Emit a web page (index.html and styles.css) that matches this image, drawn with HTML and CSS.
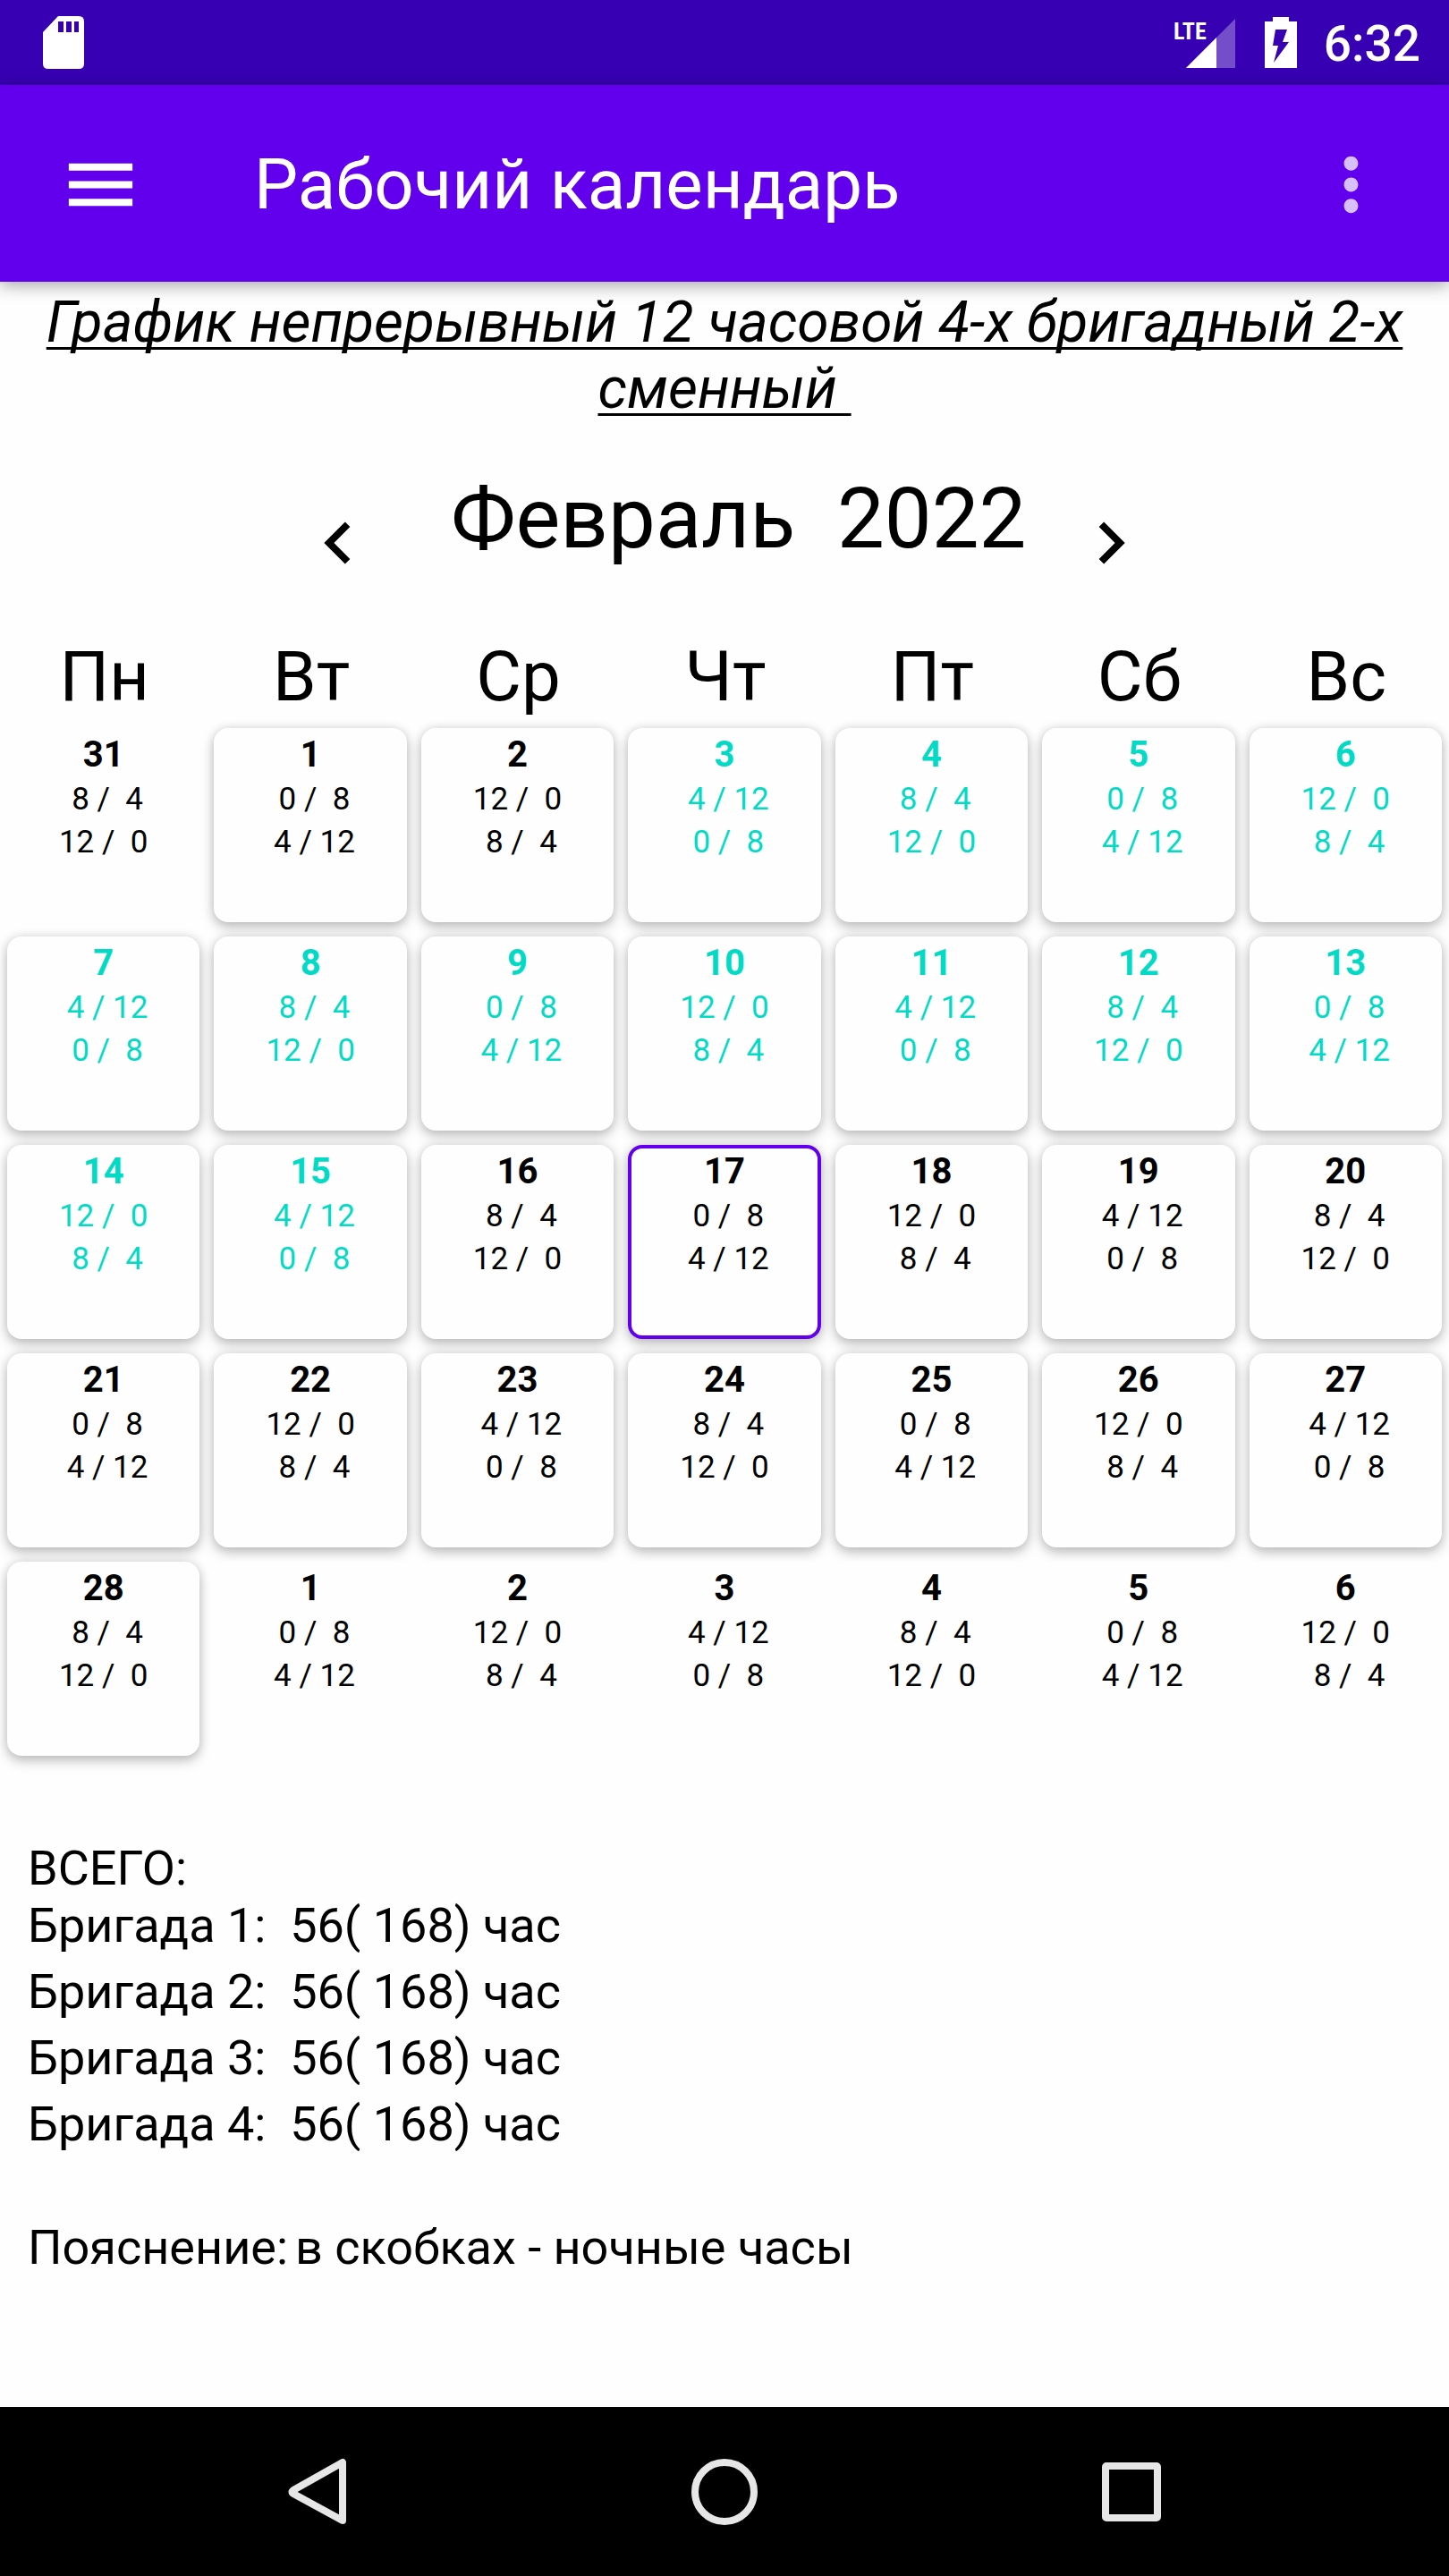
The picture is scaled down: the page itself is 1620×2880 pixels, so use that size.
FILE: index.html
```html
<!DOCTYPE html>
<html lang="ru">
<head>
<meta charset="utf-8">
<meta name="viewport" content="width=device-width, initial-scale=1">
<title>Рабочий календарь</title>
<link rel="stylesheet" href="styles.css">
</head>
<body>
<div class="screen">
  <div class="status-bar">
    <svg class="sd-icon" width="46" height="59" viewBox="0 0 46 59" aria-hidden="true">
      <path fill="#fff" fill-rule="evenodd" d="M17 0H40Q46 0 46 6V53Q46 59 40 59H6Q0 59 0 53V18ZM17 6V18H23V6ZM26 6V18H32V6ZM35 6V18H40V6Z"/>
    </svg>
    <div class="status-right">
      <svg class="signal-icon" width="68" height="57" viewBox="0 0 68 57" role="img" aria-label="LTE">
        <path fill="#fff" fill-opacity=".3" d="M68 2V57H13Z"/>
        <path fill="#fff" d="M47 23V57H13Z"/>
        <text class="lte" x="-1" y="25">LTE</text>
      </svg>
      <svg class="battery-icon" width="36" height="57" viewBox="0 0 36 57" aria-hidden="true">
        <path fill="#fff" fill-rule="evenodd" d="M9 0H27V5H36V57H0V5H9ZM12 14L9 32H15L10 51L27 28H20L25 14Z"/>
      </svg>
      <span class="clock">6:32</span>
    </div>
  </div>

  <header class="app-bar">
    <button class="icon-button" type="button" aria-label="Меню">
      <svg width="95" height="95" viewBox="0 0 24 24" aria-hidden="true"><path fill="#fff" d="M3 18h18v-2H3zm0-5h18v-2H3zm0-7v2h18V6z"/></svg>
    </button>
    <h1 class="app-title">Рабочий календарь</h1>
    <button class="icon-button" type="button" aria-label="Ещё">
      <svg width="95" height="95" viewBox="0 0 24 24" aria-hidden="true"><path fill="#d7bffb" d="M12 8c1.1 0 2-.9 2-2s-.9-2-2-2-2 .9-2 2 .9 2 2 2zm0 2c-1.100 0-2 .9-2 2s.9 2 2 2 2-.9 2-2-.9-2-2-2zm0 6c-1.100 0-2 .9-2 2s.9 2 2 2 2-.9 2-2-.9-2-2-2z"/></svg>
    </button>
  </header>

  <main class="content">
    <h2 class="schedule-name">График непрерывный 12 часовой 4-х бригадный 2-х сменный&nbsp;</h2>

    <div class="month-nav">
      <button class="month-button" type="button" aria-label="Предыдущий месяц">
        <svg width="94" height="94" viewBox="0 0 24 24" aria-hidden="true"><path d="M15.410 7.410L14 6l-6 6 6 6 1.410-1.410L10.830 12z"/></svg>
      </button>
      <h3 class="month-title"> Февраль  2022</h3>
      <button class="month-button" type="button" aria-label="Следующий месяц">
        <svg width="94" height="94" viewBox="0 0 24 24" aria-hidden="true"><path d="M10 6L8.590 7.410 13.170 12l-4.580 4.590L10 18l6-6z"/></svg>
      </button>
    </div>

    <table class="calendar">
      <thead>
        <tr><th scope="col">Пн</th><th scope="col">Вт</th><th scope="col">Ср</th><th scope="col">Чт</th><th scope="col">Пт</th><th scope="col">Сб</th><th scope="col">Вс</th></tr>
      </thead>
      <tbody>
        <tr>
          <td><div class="day outside"><strong>31</strong><span> 8 /  4</span><span>12 /  0</span></div></td>
          <td><div class="day"><strong>1</strong><span> 0 /  8</span><span> 4 / 12</span></div></td>
          <td><div class="day"><strong>2</strong><span>12 /  0</span><span> 8 /  4</span></div></td>
          <td><div class="day vacation"><strong>3</strong><span> 4 / 12</span><span> 0 /  8</span></div></td>
          <td><div class="day vacation"><strong>4</strong><span> 8 /  4</span><span>12 /  0</span></div></td>
          <td><div class="day vacation"><strong>5</strong><span> 0 /  8</span><span> 4 / 12</span></div></td>
          <td><div class="day vacation"><strong>6</strong><span>12 /  0</span><span> 8 /  4</span></div></td>
        </tr>
        <tr>
          <td><div class="day vacation"><strong>7</strong><span> 4 / 12</span><span> 0 /  8</span></div></td>
          <td><div class="day vacation"><strong>8</strong><span> 8 /  4</span><span>12 /  0</span></div></td>
          <td><div class="day vacation"><strong>9</strong><span> 0 /  8</span><span> 4 / 12</span></div></td>
          <td><div class="day vacation"><strong>10</strong><span>12 /  0</span><span> 8 /  4</span></div></td>
          <td><div class="day vacation"><strong>11</strong><span> 4 / 12</span><span> 0 /  8</span></div></td>
          <td><div class="day vacation"><strong>12</strong><span> 8 /  4</span><span>12 /  0</span></div></td>
          <td><div class="day vacation"><strong>13</strong><span> 0 /  8</span><span> 4 / 12</span></div></td>
        </tr>
        <tr>
          <td><div class="day vacation"><strong>14</strong><span>12 /  0</span><span> 8 /  4</span></div></td>
          <td><div class="day vacation"><strong>15</strong><span> 4 / 12</span><span> 0 /  8</span></div></td>
          <td><div class="day"><strong>16</strong><span> 8 /  4</span><span>12 /  0</span></div></td>
          <td><div class="day today"><strong>17</strong><span> 0 /  8</span><span> 4 / 12</span></div></td>
          <td><div class="day"><strong>18</strong><span>12 /  0</span><span> 8 /  4</span></div></td>
          <td><div class="day"><strong>19</strong><span> 4 / 12</span><span> 0 /  8</span></div></td>
          <td><div class="day"><strong>20</strong><span> 8 /  4</span><span>12 /  0</span></div></td>
        </tr>
        <tr>
          <td><div class="day"><strong>21</strong><span> 0 /  8</span><span> 4 / 12</span></div></td>
          <td><div class="day"><strong>22</strong><span>12 /  0</span><span> 8 /  4</span></div></td>
          <td><div class="day"><strong>23</strong><span> 4 / 12</span><span> 0 /  8</span></div></td>
          <td><div class="day"><strong>24</strong><span> 8 /  4</span><span>12 /  0</span></div></td>
          <td><div class="day"><strong>25</strong><span> 0 /  8</span><span> 4 / 12</span></div></td>
          <td><div class="day"><strong>26</strong><span>12 /  0</span><span> 8 /  4</span></div></td>
          <td><div class="day"><strong>27</strong><span> 4 / 12</span><span> 0 /  8</span></div></td>
        </tr>
        <tr>
          <td><div class="day"><strong>28</strong><span> 8 /  4</span><span>12 /  0</span></div></td>
          <td><div class="day outside"><strong>1</strong><span> 0 /  8</span><span> 4 / 12</span></div></td>
          <td><div class="day outside"><strong>2</strong><span>12 /  0</span><span> 8 /  4</span></div></td>
          <td><div class="day outside"><strong>3</strong><span> 4 / 12</span><span> 0 /  8</span></div></td>
          <td><div class="day outside"><strong>4</strong><span> 8 /  4</span><span>12 /  0</span></div></td>
          <td><div class="day outside"><strong>5</strong><span> 0 /  8</span><span> 4 / 12</span></div></td>
          <td><div class="day outside"><strong>6</strong><span>12 /  0</span><span> 8 /  4</span></div></td>
        </tr>
      </tbody>
    </table>

    <section class="totals">
      <p>ВСЕГО:</p>
      <ul class="brigades">
        <li>Бригада 1:  56( 168) час</li>
        <li>Бригада 2:  56( 168) час</li>
        <li>Бригада 3:  56( 168) час</li>
        <li>Бригада 4:  56( 168) час</li>
      </ul>
      <p class="note"><span>Пояснение:</span><span>в скобках - ночные часы</span></p>
    </section>
  </main>

  <nav class="system-nav" aria-label="Система">
    <button class="system-button" type="button" aria-label="Назад">
      <svg width="76" height="76" viewBox="0 0 76 76" aria-hidden="true"><path d="M65 5V70L10 40Q7 38 10 36Z" fill="none" stroke="#e6e6e6" stroke-width="8" stroke-linejoin="round"/></svg>
    </button>
    <button class="system-button" type="button" aria-label="Домой">
      <svg width="76" height="76" viewBox="0 0 76 76" aria-hidden="true"><circle cx="38" cy="38" r="33" fill="none" stroke="#e6e6e6" stroke-width="8"/></svg>
    </button>
    <button class="system-button" type="button" aria-label="Обзор">
      <svg width="76" height="76" viewBox="0 0 76 76" aria-hidden="true"><rect x="10" y="9" width="58" height="58" rx="1" fill="none" stroke="#e6e6e6" stroke-width="8" stroke-linejoin="round"/></svg>
    </button>
  </nav>
</div>
</body>
</html>
```
FILE: styles.css
```css
* {
  box-sizing: border-box;
  margin: 0;
  padding: 0;
}

body {
  background: #fefefe;
  color: #000;
  font-family: Roboto, "Noto Sans", sans-serif;
}

button {
  display: flex;
  align-items: center;
  justify-content: center;
  border: 0;
  background: none;
  cursor: pointer;
}

.screen {
  display: flex;
  flex-direction: column;
  min-height: 100vh;
}

/* Status bar */
.status-bar {
  display: flex;
  align-items: center;
  justify-content: space-between;
  height: 95px;
  padding: 0 32px 0 48px;
  background: #3700b3;
  color: #fff;
}

.status-right {
  display: flex;
  align-items: center;
}

.signal-icon {
  overflow: visible;
}

.battery-icon {
  margin: 0 30px 0 33px;
}

.lte {
  fill: #fff;
  font-family: "Roboto Condensed", "Liberation Sans Narrow", Roboto, sans-serif;
  font-size: 26px;
  font-weight: 700;
}

.clock {
  padding: 3px 0 0;
  font-size: 55px;
  font-weight: 500;
  line-height: 64px;
}

/* App bar */
.app-bar {
  position: relative;
  display: flex;
  align-items: center;
  height: 220px;
  padding: 2px 62px 0 65px;
  background: #6200ee;
  color: #fff;
  box-shadow: 0 4px 18px rgba(0, 0, 0, .35);
}

.app-title {
  flex: 1;
  padding: 2px 0 0 124px;
  font-size: 78px;
  font-weight: 400;
  line-height: 94px;
}

/* Content */
.content {
  flex: 1;
}

.schedule-name {
  padding: 9px 16px 0;
  font-size: 64px;
  font-style: italic;
  font-weight: 400;
  line-height: 74px;
  text-align: center;
  text-decoration: underline;
  text-decoration-thickness: 3px;
  text-decoration-skip-ink: none;
  text-underline-offset: 6px;
}

.month-nav {
  display: flex;
  align-items: flex-end;
  justify-content: center;
  gap: 48px;
  height: 130px;
  margin: 52px 0 57px;
}

.month-title {
  align-self: flex-start;
  padding: 0 0 0 8px;
  font-size: 94px;
  font-weight: 400;
  line-height: 112px;
  white-space: pre;
}

.calendar {
  width: 100%;
  border-collapse: separate;
  border-spacing: 0;
  table-layout: fixed;
}

.calendar th {
  height: 95px;
  padding: 0 0 3px 2px;
  font-size: 78px;
  font-weight: 400;
  line-height: 92px;
}

.calendar td {
  padding: 8px;
}

.day {
  display: flex;
  flex-direction: column;
  align-items: center;
  height: 217px;
  padding: 4px 0 0;
  border-radius: 16px;
  background: #fefefe;
  box-shadow: 0 6px 14px rgba(0, 0, 0, .22), 0 0 12px rgba(0, 0, 0, .12);
  font-size: 35px;
  line-height: 48px;
  white-space: pre;
}

.day strong {
  font-size: 40px;
  font-weight: 700;
  line-height: 52px;
}

.day.vacation {
  color: #03dac5;
}

.day.outside {
  box-shadow: none;
}

.day.today {
  padding: 0;
  border: 4px solid #6200ee;
}

.totals {
  padding: 86px 31px 0;
  font-size: 54px;
  line-height: 64px;
}

.brigades {
  display: grid;
  gap: 10px;
  list-style: none;
  white-space: pre;
}

.note {
  display: flex;
  gap: 8px;
  padding: 74px 0 0;
}

/* System navigation */
.system-nav {
  display: flex;
  justify-content: center;
  height: 189px;
  background: #000;
}

.system-button {
  flex: 0 0 28%;
}
```
